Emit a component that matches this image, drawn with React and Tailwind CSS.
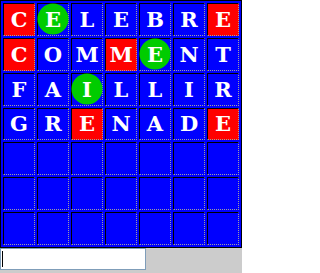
import React from "react";

const rows = [
  [["C", "red"], ["E", "green"], ["L"], ["E"], ["B"], ["R"], ["E", "red"]],
  [["C", "red"], ["O"], ["M"], ["M", "red"], ["E", "green"], ["N"], ["T"]],
  [["F"], ["A"], ["I", "green"], ["L"], ["L"], ["I"], ["R"]],
  [["G"], ["R"], ["E", "red"], ["N"], ["A"], ["D"], ["E", "red"]],
];

const emptyRow = Array.from({ length: 7 }, () => [""]);
const board = [...rows, emptyRow, emptyRow, emptyRow];

const Cell = ({ letter, mark }) => (
  <div
    className={`relative flex items-center justify-center border border-t-black border-l-black border-r-[#a0a0a0] border-b-[#a0a0a0] [border-style:solid_dotted_dotted_solid] ${
      mark === "red" ? "bg-[#ff0000]" : "bg-[#0000ff]"
    }`}
  >
    {mark === "green" && (
      <span className="absolute left-1/2 top-1/2 h-[31px] w-[31px] -translate-x-1/2 -translate-y-1/2 rounded-full bg-[#00cc00]" />
    )}
    <span className="relative font-['DejaVu_Serif',serif] text-[21px] font-bold leading-none text-white">
      {letter}
    </span>
  </div>
);

export default function App() {
  return (
    <div className="min-h-screen w-[242px] bg-[#cccccc]">
      <div className="grid h-[248px] w-[242px] grid-cols-7 grid-rows-7 gap-[2px] border border-black bg-[#0000ff] p-[2px]">
        {board.map((row, r) =>
          row.map(([letter, mark], c) => (
            <Cell key={`${r}-${c}`} letter={letter} mark={mark} />
          ))
        )}
      </div>
      <div className="relative w-[146px]">
        <input
          type="text"
          className="block h-[22px] w-[146px] border border-[#7f9db9] bg-white px-[2px] font-['Liberation_Sans',sans-serif] text-[13px] text-black outline-none"
        />
        {/* caret of the focused field */}
        <span className="absolute left-[2px] top-[3px] h-[16px] w-[1px] bg-black" />
      </div>
    </div>
  );
}
